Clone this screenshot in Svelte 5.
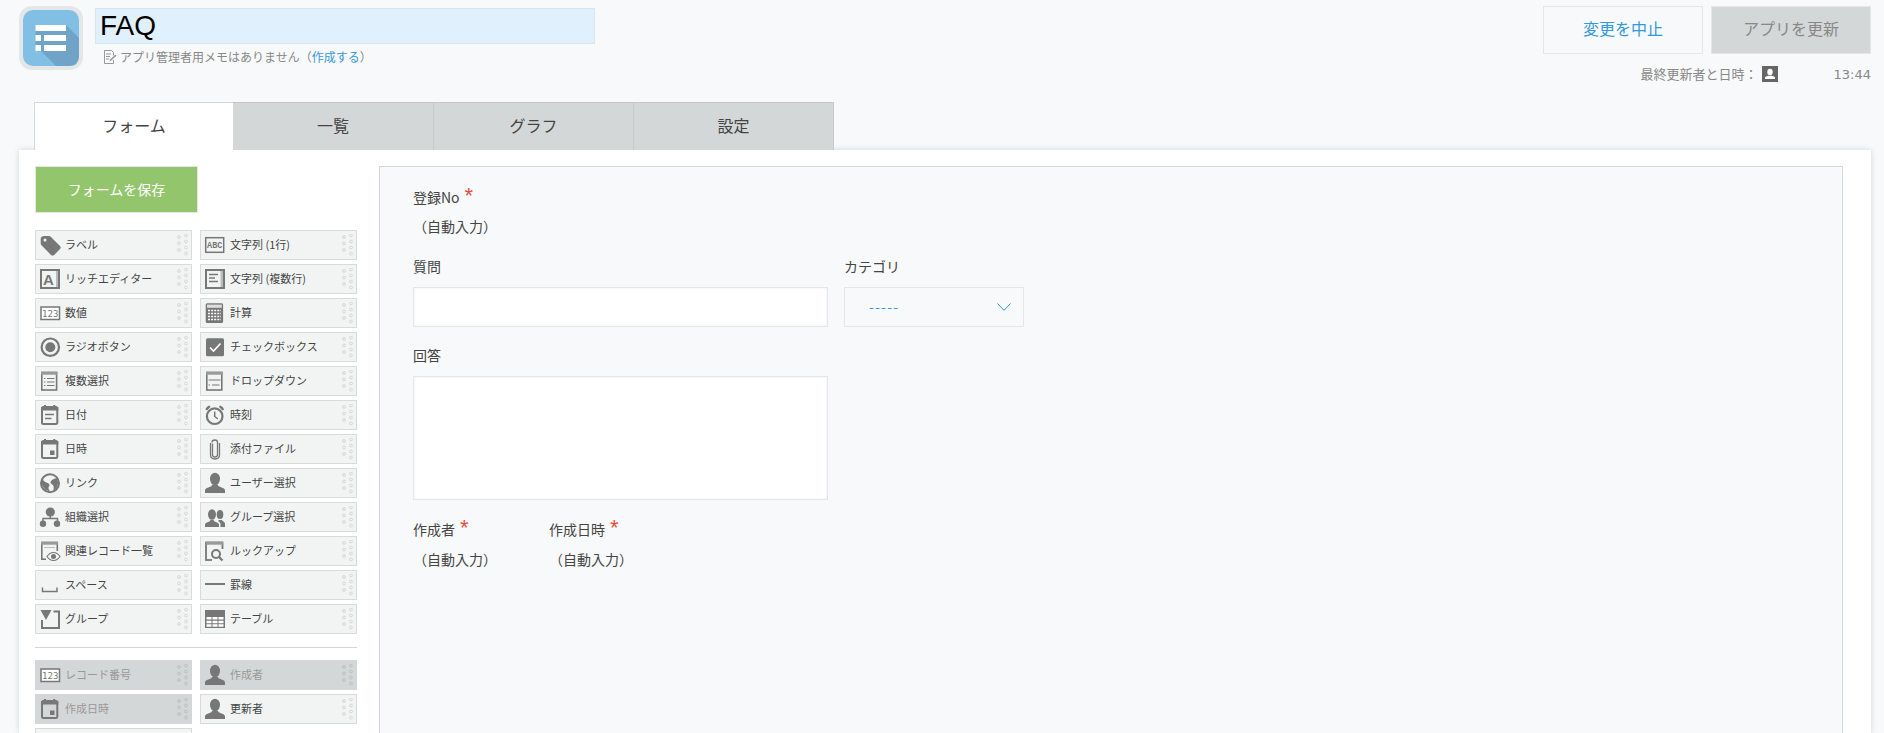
<script>
  const g = "#777";
  const person = (fill = g) => `<ellipse cx="12" cy="8" rx="5" ry="6.2" fill="${fill}"/><path d="M2 22v-2.5c0-2 3.2-2.9 6-3.9l1.6-2h4.8l1.6 2c2.8 1 6 1.9 6 3.9V22z" fill="${fill}"/>`;

  const icons = {
    tag: `<path fill-rule="evenodd" d="M2.7 6C2.7 4.2 4.2 3 6 3h5c.8 0 1.4.3 2 .9l9 9c.9.9.9 2.3 0 3.2l-5.8 5.8c-.9.9-2.3.9-3.2 0l-9.3-9.3c-.6-.6-1-1.2-1-2zM7 5.500a1.500 1.500 0 1 0 0 3 1.500 1.500 0 0 0 0-3z" fill="${g}"/>`,
    abc: `<rect x="2.700" y="4.700" width="18" height="14.600" fill="none" stroke="${g}" stroke-width="1.500"/><text x="11.700" y="15.200" text-anchor="middle" font-size="8.500" font-family="Liberation Mono" font-weight="700" fill="${g}">ABC</text>`,
    rich: `<rect x="3" y="3" width="18" height="18" fill="none" stroke="${g}" stroke-width="2"/><rect x="18" y="4" width="2" height="16" fill="#bbb"/><text x="10.500" y="17.500" text-anchor="middle" font-size="15" font-family="Liberation Sans" font-weight="700" fill="${g}">A</text>`,
    num: `<rect x="3" y="6" width="18.500" height="12.500" fill="#fff" stroke="${g}" stroke-width="1.500"/><text x="12.200" y="15.800" text-anchor="middle" font-size="9" font-family="DejaVu Sans Mono" fill="${g}">123</text>`,
    multi: `<rect x="3" y="3" width="18" height="18" fill="none" stroke="${g}" stroke-width="2"/><rect x="17.500" y="4" width="2.500" height="16" fill="#bbb"/><path d="M6 7.500h9M6 11h6M6 14.500h9" stroke="${g}" stroke-width="1.500"/>`,
    calc: `<rect x="2.700" y="2.300" width="17.400" height="19.700" rx="1.500" fill="${g}"/><rect x="4" y="3.600" width="14.800" height="3.200" fill="#ddd"/><path d="M5 9.500h13M5 12.500h13M5 15.500h13M5 18.500h13" stroke="#fff" stroke-width="1.600" stroke-dasharray="2 1.100"/>`,
    radio: `<circle cx="12.300" cy="12.200" r="8.700" fill="none" stroke="${g}" stroke-width="2.200"/><circle cx="12.300" cy="12.200" r="5" fill="${g}"/>`,
    check: `<rect x="3" y="3.300" width="18" height="18" rx="1.500" fill="${g}"/><path d="M7 12.500l3.500 3.500 7-7.500" fill="none" stroke="#fff" stroke-width="1.600"/>`,
    mselect: `<rect x="3.800" y="3.500" width="14.800" height="17.500" fill="none" stroke="${g}" stroke-width="1.600"/><rect x="3" y="2.700" width="16.300" height="3" fill="#999"/><path d="M6 9.500h1.500M9 9.500h7.500M6 13h1.500M9 13h7.500M6 16.500h1.500M9 16.500h7.500" stroke="${g}" stroke-width="1.100"/>`,
    dropdown: `<rect x="3.800" y="3.500" width="15" height="17.500" fill="none" stroke="${g}" stroke-width="1.600"/><rect x="3" y="2.700" width="16.700" height="3" fill="#999"/><path d="M5.500 11h12M5.500 16h1.500M9 16h7.500" stroke="${g}" stroke-width="1.100"/>`,
    date: `<rect x="4" y="4" width="15.300" height="17" rx="1.500" fill="none" stroke="${g}" stroke-width="2"/><path d="M3 4h17.300v3.500H3zM6 2h2v3H6zM15.300 2h2v3h-2z" fill="${g}"/><path d="M7 11.500h9M7 15.500h6.500" stroke="${g}" stroke-width="1.600"/>`,
    time: `<circle cx="11.700" cy="13.200" r="7.800" fill="none" stroke="${g}" stroke-width="2.200"/><path d="M11.700 8.500v5l3.200 2.500" fill="none" stroke="${g}" stroke-width="1.500"/><path d="M2.500 6.500C3 4.500 4.500 3 6.500 2.500L7.500 4 4 7.500zM21 6.500c-.5-2-2-3.500-4-4L16 4l3.500 3.500z" fill="${g}"/>`,
    datetime: `<rect x="4" y="4" width="15.300" height="17" rx="1.500" fill="none" stroke="${g}" stroke-width="2"/><path d="M3 4h17.300v3.500H3zM6 2h2v3H6zM15.300 2h2v3h-2z" fill="${g}"/><rect x="12" y="13.500" width="4.500" height="4.500" fill="${g}"/>`,
    clip: `<path d="M9.500 6.500v11c0 1.500 1 2.500 2.500 2.500s2.500-1 2.500-2.500V5.500C14.500 3.800 13.300 3 12 3S9 3.800 9 5.500M7.500 6v11.500c0 2.800 2 4.500 4.500 4.500s4.500-1.700 4.500-4.500V6" fill="none" stroke="${g}" stroke-width="1.300"/>`,
    link: `<circle cx="12" cy="12.200" r="9" fill="none" stroke="${g}" stroke-width="2"/><path d="M11 4c-2 .5-5 2-6 4 0 2 2 3 3.500 3.500 1.500.5 3 1 3 3 0 1-1.500 1.500-1 3 .3 1 1 2 1.500 3l-5-2-4-6 2-6 4-3zM14 9c1.500-1 3.500-2 5-2l1.500 5-2 5-3 3c0-2 .5-3.500 0-5-.5-1.500-3-2-3-3.500 0-1 1-2 1.500-2.500z" fill="${g}"/>`,
    user: person(),
    org: `<circle cx="12.300" cy="7" r="4.600" fill="${g}"/><path d="M12.300 10v3.500M5 17v-3.500h14.500V17" fill="none" stroke="${g}" stroke-width="1.500"/><circle cx="5" cy="18.700" r="3.200" fill="${g}"/><circle cx="19" cy="18.700" r="3.200" fill="${g}"/>`,
    group: `<ellipse cx="9" cy="9.500" rx="4" ry="5.200" fill="${g}"/><path d="M2 22v-2.500c0-1.500 2.500-2.300 4.500-3l1-1.500h3l1 1.500c2 .7 4.500 1.500 4.500 3V22z" fill="${g}"/><ellipse cx="17" cy="9.500" rx="3.300" ry="4.500" fill="${g}"/><path d="M17.500 22v-3c0-1.500-1.500-2.500-2.500-3l1-1h3l.5 1c1.500.5 2.500 1.500 2.500 3v3z" fill="${g}"/>`,
    related: `<path d="M3.800 21V3.500h15.500V12" fill="none" stroke="${g}" stroke-width="1.600"/><rect x="3" y="2.700" width="17" height="3" fill="#999"/><path d="M6 8.500h11" stroke="#bbb"/><path d="M3 20.200h5" stroke="${g}" stroke-width="1.600"/><path d="M9 17.500c2-3 4-4 6.500-4s4.500 1 6.500 4c-2 3-4 4-6.500 4s-4.500-1-6.500-4z" fill="#f2f4f4" stroke="${g}" stroke-width="1.200"/><circle cx="15.500" cy="17.500" r="2.500" fill="${g}"/>`,
    lookup: `<rect x="3" y="3.500" width="16.500" height="17.500" fill="none" stroke="${g}" stroke-width="1.800"/><rect x="3" y="2.700" width="17" height="3" fill="#999"/><rect x="9" y="10" width="13" height="13" fill="#f2f4f4"/><circle cx="13" cy="15" r="4" fill="none" stroke="${g}" stroke-width="2"/><path d="M16 18l3.500 3.500" stroke="${g}" stroke-width="2.200"/>`,
    space: `<path d="M4.500 14.500v4h14.500v-4" fill="none" stroke="${g}" stroke-width="1.500"/>`,
    rule: `<rect x="2" y="10" width="20" height="2" fill="${g}"/>`,
    fieldgroup: `<path d="M15.500 4.500H21V21H4V13" fill="none" stroke="${g}" stroke-width="2"/><path d="M2.500 3h11l-5.500 10z" fill="${g}"/>`,
    table: `<rect x="2" y="3" width="20" height="18" fill="${g}"/><path d="M3.500 10h5v2.500h-5zM9.500 10h5v2.500h-5zM15.500 10h5v2.500h-5zM3.500 13.700h5v2.500h-5zM9.500 13.700h5v2.500h-5zM15.500 13.700h5v2.500h-5zM3.500 17.300h5v2.500h-5zM9.500 17.300h5v2.500h-5zM15.500 17.300h5v2.500h-5z" fill="#fff"/>`
  };

  const tabs = ["フォーム", "一覧", "グラフ", "設定"];

  const fields = [
    ["tag", "ラベル"], ["abc", "文字列 (1行)"],
    ["rich", "リッチエディター"], ["multi", "文字列 (複数行)"],
    ["num", "数値"], ["calc", "計算"],
    ["radio", "ラジオボタン"], ["check", "チェックボックス"],
    ["mselect", "複数選択"], ["dropdown", "ドロップダウン"],
    ["date", "日付"], ["time", "時刻"],
    ["datetime", "日時"], ["clip", "添付ファイル"],
    ["link", "リンク"], ["user", "ユーザー選択"],
    ["org", "組織選択"], ["group", "グループ選択"],
    ["related", "関連レコード一覧"], ["lookup", "ルックアップ"],
    ["space", "スペース"], ["rule", "罫線"],
    ["fieldgroup", "グループ"], ["table", "テーブル"]
  ];

  // the last row runs off the bottom of the window, only its top edge shows
  const systemFields = [
    ["num", "レコード番号", true], ["user", "作成者", true],
    ["datetime", "作成日時", true], ["user", "更新者", false],
    [null, "", false]
  ];

  const gripDots = [[4, 3], [4, 9.500], [4, 16], [11, 1.500], [11, 7.500], [11, 13.500], [11, 19.500]];
</script>

{#snippet paletteItem(icon, label, used)}
  <div class="item" class:used>
    {#if icon}
      <svg class="ficon" viewBox="0 0 24 24" width="24" height="24">{@html icons[icon]}</svg>
      <span class="item-label">{label}</span>
      <svg class="grip" viewBox="0 0 13 22" width="13" height="22">
        {#each gripDots as [cx, cy]}
          <circle {cx} {cy} r="1.400" fill="none" stroke={used ? "#bcbfbf" : "#d4d7d7"} />
        {/each}
      </svg>
    {/if}
  </div>
{/snippet}

<div class="page">
  <header class="header">
    <div class="app">
      <div class="app-icon">
        <svg viewBox="0 0 56 56" width="56" height="56">
          <rect width="56" height="56" rx="10" fill="#82bfe5" />
          <path d="M43 15 56 28V46Q56 56 46 56H33L12.500 35.500V15z" fill="#6fa3c8" />
          <path d="M12.500 15H43v6H12.500zM12.500 25h5.500v6h-5.500zM21 25h22v6H21zM12.500 35h5.500v6h-5.500zM21 35h22v6H21z" fill="#fff" />
        </svg>
      </div>
      <div class="app-info">
        <div class="title">FAQ</div>
        <div class="memo">
          <svg viewBox="0 0 14 14" width="14" height="14">
            <path d="M1.500.500h7l2 2v3M10.500 10v3.500h-9V.500M3 4h5M3 6.500h4M3 9h3" fill="none" stroke="#999" />
            <path d="M6.500 11.500l.5-2 5.500-5 1 1.200-5.500 5z" fill="#999" />
          </svg>
          <span>アプリ管理者用メモはありません（<span class="link">作成する</span>）</span>
        </div>
      </div>
    </div>
    <div class="actions">
      <div class="buttons">
        <div class="btn cancel">変更を中止</div>
        <div class="btn update">アプリを更新</div>
      </div>
      <div class="meta">
        <span class="meta-label">最終更新者と日時：</span>
        <svg class="meta-user" viewBox="0 0 16 16" width="16" height="16">
          <rect width="16" height="16" fill="#666" />
          <ellipse cx="8" cy="6" rx="2.700" ry="3.300" fill="#fff" />
          <path d="M3 13v-1.200c0-1 1.700-1.400 3-2h4c1.300.6 3 1 3 2V13z" fill="#fff" />
        </svg>
        <span class="meta-time">13:44</span>
      </div>
    </div>
  </header>

  <nav class="tabs">
    {#each tabs as tab, i}
      <div class="tab" class:active={i === 0}>{tab}</div>
    {/each}
  </nav>

  <main class="panel">
    <aside class="palette">
      <div class="save">フォームを保存</div>
      <div class="grid">
        {#each fields as [icon, label]}
          {@render paletteItem(icon, label, false)}
        {/each}
      </div>
      <hr class="divider" />
      <div class="grid">
        {#each systemFields as [icon, label, used]}
          {@render paletteItem(icon, label, used)}
        {/each}
      </div>
    </aside>

    <section class="canvas">
      <div class="row first">
        <div class="field">
          <div class="label">登録No<span class="req">*</span></div>
          <div class="auto-value">（自動入力）</div>
        </div>
      </div>
      <div class="row">
        <div class="field">
          <div class="label">質問</div>
          <div class="input"></div>
        </div>
        <div class="field">
          <div class="label">カテゴリ</div>
          <div class="select">
            <span class="dashes">-----</span>
            <svg viewBox="0 0 14 8" width="14" height="8"><path d="M.500.500 7 7.300 13.500.500" fill="none" stroke="#3498db" /></svg>
          </div>
        </div>
      </div>
      <div class="row">
        <div class="field">
          <div class="label">回答</div>
          <div class="textarea"></div>
        </div>
      </div>
      <div class="row system">
        <div class="field creator">
          <div class="label">作成者<span class="req">*</span></div>
          <div class="auto-value">（自動入力）</div>
        </div>
        <div class="field">
          <div class="label">作成日時<span class="req">*</span></div>
          <div class="auto-value">（自動入力）</div>
        </div>
      </div>
    </section>
  </main>
</div>

<style>
  :global(body) {
    background: #f7f9fa;
    overflow: hidden;
  }

  .page {
    height: 733px;
    overflow: hidden;
    background: #f7f9fa;
    color: #333;
    font-family: "Noto Sans CJK JP", "Noto Sans", sans-serif;
  }

  .header {
    height: 102px;
    box-sizing: border-box;
    padding: 6px 13px 0 19px;
    display: flex;
    justify-content: space-between;
  }
  .app {
    display: flex;
  }
  .app-icon {
    width: 64px;
    height: 64px;
    box-sizing: border-box;
    padding: 4px;
    background: #e3e7e8;
    border-radius: 13px;
  }
  .app-icon svg {
    display: block;
  }
  .app-info {
    margin-left: 12px;
    padding-top: 2px;
  }
  .title {
    width: 500px;
    height: 36px;
    box-sizing: border-box;
    background: #e0f1fd;
    border: 1px solid #d8e6ef;
    padding-left: 4px;
    font-size: 28px;
    line-height: 33px;
    color: #000;
    font-family: "Liberation Sans", sans-serif;
  }
  .memo {
    display: flex;
    align-items: center;
    gap: 3px;
    margin: 5px 0 0 8px;
    font-size: 12px;
    line-height: 16px;
    color: #888;
  }
  .link {
    color: #3498db;
  }

  .actions {
    display: flex;
    flex-direction: column;
    align-items: flex-end;
  }
  .buttons {
    display: flex;
    gap: 8px;
  }
  .btn {
    width: 160px;
    height: 48px;
    box-sizing: border-box;
    border: 1px solid #e3e7e8;
    padding-bottom: 4px;
    display: flex;
    align-items: center;
    justify-content: center;
    font-size: 16px;
  }
  .cancel {
    color: #3498db;
  }
  .update {
    background: #d4d7d7;
    color: #888;
  }
  .meta {
    display: flex;
    align-items: center;
    height: 16px;
    margin-top: 12px;
    font-size: 13px;
    color: #888;
  }
  .meta-label {
    padding-bottom: 2px;
  }
  .meta-user {
    margin-left: 4px;
  }
  .meta-time {
    margin-left: 56px;
    font-family: "DejaVu Sans", sans-serif;
    font-size: 13px;
  }

  .tabs {
    display: flex;
    height: 48px;
    margin-left: 34px;
  }
  .tab {
    width: 200px;
    box-sizing: border-box;
    background: #d4d7d7;
    border-top: 1px solid #c4c7c7;
    border-right: 1px solid #c8cbcb;
    padding-bottom: 4px;
    display: flex;
    align-items: center;
    justify-content: center;
    font-size: 16px;
    color: #444;
  }
  .tab.active {
    width: 199px;
    background: #fff;
    border-top-color: #d4d7d7;
    border-left: 1px solid #d4d7d7;
    border-right: 0;
  }
  .tab.active + .tab {
    width: 201px;
  }

  .panel {
    display: flex;
    margin: 0 13px 0 19px;
    padding: 16px 28px 0 16px;
    background: #fff;
    box-shadow: 0 0 6px rgba(0, 0, 0, 0.15);
    height: 583px;
    box-sizing: border-box;
  }

  .palette {
    width: 322px;
    flex: none;
    margin-right: 22px;
  }
  .save {
    width: 163px;
    height: 47px;
    margin-bottom: 17px;
    box-sizing: border-box;
    border: 1px solid #e3e7e8;
    background: #93c66c;
    color: #fff;
    font-size: 14px;
    padding-bottom: 2px;
    display: flex;
    align-items: center;
    justify-content: center;
  }
  .grid {
    display: grid;
    grid-template-columns: 157px 157px;
    column-gap: 8px;
    row-gap: 4px;
  }
  .item {
    height: 30px;
    box-sizing: border-box;
    border: 1px solid #d8dbdb;
    background: #f2f4f4;
    padding-left: 2px;
    display: flex;
    align-items: center;
    font-size: 11px;
    color: #444;
  }
  .item.used {
    background: #d4d7d7;
    border-color: #d4d7d7;
    color: #999;
  }
  .ficon {
    flex: none;
  }
  .item-label {
    margin-left: 3px;
    padding-bottom: 3px;
    white-space: nowrap;
  }
  .grip {
    margin-left: auto;
    margin-right: 3px;
    flex: none;
  }
  .divider {
    border: 0;
    height: 1px;
    background: #d4d7d7;
    margin: 13px 0 12px;
  }

  .canvas {
    flex: 1;
    box-sizing: border-box;
    height: 600px;
    border: 1px solid #d4d7d7;
    background: #f7f9fa;
    padding: 19px 33px;
  }
  .row {
    display: flex;
    gap: 16px;
    margin-bottom: 18px;
  }
  .row.first {
    margin-bottom: 19px;
  }
  .row.system {
    gap: 0;
  }
  .row.system .label {
    margin-bottom: 9px;
  }
  .creator {
    width: 136px;
  }
  .label {
    font-size: 14px;
    line-height: 20px;
    margin-bottom: 8px;
    color: #444;
  }
  .req {
    color: #e74c3c;
    font-size: 22px;
    line-height: 20px;
    margin-left: 5px;
    font-family: "Liberation Sans", sans-serif;
  }
  .auto-value {
    font-size: 14px;
    line-height: 22px;
    color: #444;
  }
  .input,
  .textarea {
    width: 415px;
    box-sizing: border-box;
    margin-top: 11px;
    background: #fff;
    border: 1px solid #e3e7e8;
    box-shadow: inset 0 0 3px rgba(55, 55, 55, 0.08);
  }
  .input {
    height: 40px;
  }
  .textarea {
    height: 124px;
  }
  .select {
    width: 180px;
    height: 40px;
    box-sizing: border-box;
    margin-top: 11px;
    border: 1px solid #e3e7e8;
    padding: 0 12px 0 24px;
    display: flex;
    align-items: center;
    justify-content: space-between;
    color: #3498db;
    font-size: 14px;
  }
  .dashes {
    padding-bottom: 3px;
    letter-spacing: 1.200px;
  }
</style>
